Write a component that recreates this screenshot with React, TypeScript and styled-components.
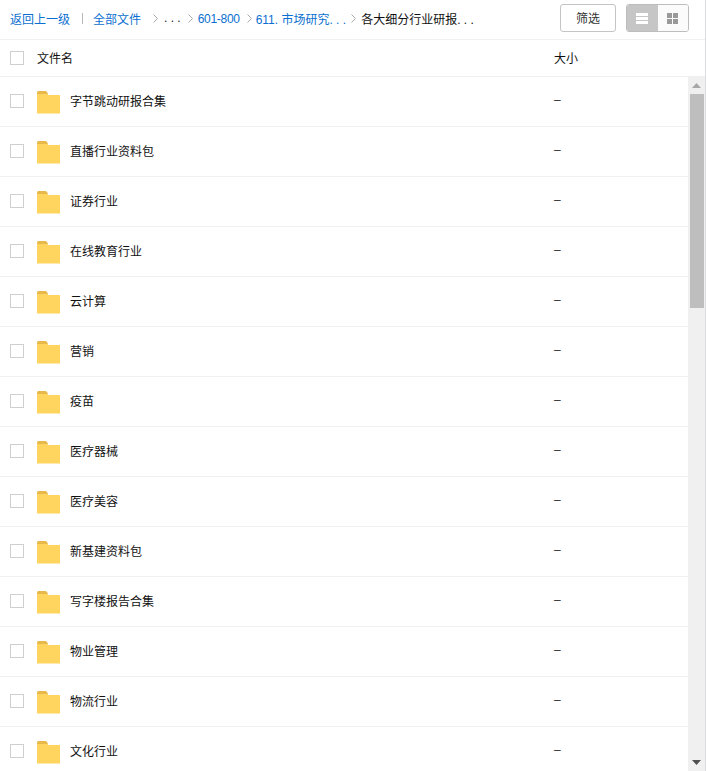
import React from 'react';
import styled, { createGlobalStyle } from 'styled-components';

const GlobalStyle = createGlobalStyle`
  html, body {
    margin: 0;
    padding: 0;
    background: #fff;
    overflow: hidden;
  }
  body {
    font-family: "Liberation Sans", "Noto Sans CJK SC", sans-serif;
    font-size: 12px;
    color: #111;
  }
`;

const Page = styled.div`
  width: 706px;
  height: 771px;
  display: flex;
  flex-direction: column;
  overflow: hidden;
  border-right: 1px solid #d8dde0;
  box-sizing: border-box;
`;

const Toolbar = styled.div`
  height: 40px;
  flex: none;
  box-sizing: border-box;
  display: flex;
  align-items: center;
  padding: 0 16px 3px 10px;
  border-bottom: 1px solid #f0f0f0;
`;

const Crumbs = styled.div`
  flex: 1;
  display: flex;
  align-items: center;
  white-space: nowrap;
`;

const CrumbLink = styled.a<{ $tight?: boolean }>`
  color: #0a6fd0;
  text-decoration: none;
  letter-spacing: ${(p) => (p.$tight ? '-0.3px' : 'normal')};
  padding-top: ${(p) => (p.$tight ? '2px' : '0')};
`;

const Divider = styled.span`
  width: 1px;
  height: 11px;
  background: #b8b8b8;
  margin: 0 10px 0 12px;
`;

const CrumbText = styled.span`
  color: #111;
`;

const Chevron = styled.svg<{ $left: number; $right: number }>`
  width: 5px;
  height: 9px;
  margin: 0 ${(p) => p.$right}px 0 ${(p) => p.$left}px;
  flex: none;
`;

const FilterButton = styled.button`
  width: 56px;
  height: 28px;
  margin-right: 10px;
  padding: 0 0 1px;
  background: #fff;
  border: 1px solid #c4c4c4;
  border-radius: 3px;
  font: inherit;
  color: #333;
`;

const ViewSwitch = styled.div`
  display: flex;
  width: 63px;
  height: 28px;
  box-sizing: border-box;
  border: 1px solid #bdbdbd;
  border-radius: 3px;
  overflow: hidden;
`;

const ViewOption = styled.div<{ $active?: boolean }>`
  flex: ${(p) => (p.$active ? '0 0 31px' : '1')};
  box-sizing: border-box;
  padding-right: 1px;
  display: flex;
  align-items: center;
  justify-content: center;
  background: ${(p) => (p.$active ? '#c6c6c6' : '#fbfbfb')};
`;

const HeaderRow = styled.div`
  height: 37px;
  flex: none;
  box-sizing: border-box;
  display: flex;
  align-items: center;
  padding-left: 10px;
  border-bottom: 1px solid #f0f0f0;
`;

const Checkbox = styled.span`
  width: 14px;
  height: 14px;
  flex: none;
  box-sizing: border-box;
  border: 1px solid #cfcfcf;
  background: #fff;
`;

const HeaderName = styled.span`
  width: 517px;
  margin-left: 13px;
  padding-bottom: 1px;
`;

const HeaderSize = styled.span`
  padding-bottom: 1px;
`;

const Body = styled.div`
  flex: 1;
  min-height: 0;
  display: flex;
`;

const List = styled.div`
  flex: 1;
  min-width: 0;
  overflow: hidden;
`;

const Row = styled.div`
  height: 50px;
  box-sizing: border-box;
  display: flex;
  align-items: center;
  padding: 0 0 1px 10px;
  border-bottom: 1px solid #f0f0f0;
`;

const FolderIcon = styled.svg`
  width: 23px;
  height: 23px;
  margin: 2px 0 0 13px;
  flex: none;
`;

const RowName = styled.span`
  width: 484px;
  margin-left: 10px;
  padding-bottom: 2px;
`;

const RowSize = styled.span`
  color: #333;
  padding-bottom: 2px;
`;

const Scrollbar = styled.div`
  width: 17px;
  flex: none;
  display: flex;
  flex-direction: column;
  align-items: center;
  background: #f0f0f0;
`;

const ScrollButton = styled.div`
  height: 17px;
  flex: none;
  display: flex;
  align-items: center;
  justify-content: center;
`;

const Thumb = styled.div`
  width: 14px;
  height: 214px;
  flex: none;
  background: #bebebe;
`;

const Track = styled.div`
  flex: 1;
`;

const folders = [
  '字节跳动研报合集',
  '直播行业资料包',
  '证券行业',
  '在线教育行业',
  '云计算',
  '营销',
  '疫苗',
  '医疗器械',
  '医疗美容',
  '新基建资料包',
  '写字楼报告合集',
  '物业管理',
  '物流行业',
  '文化行业',
];

const ChevronIcon: React.FC<{ left: number; right: number }> = ({ left, right }) => (
  <Chevron $left={left} $right={right} viewBox="0 0 5 9">
    <path d="M0.5 0.5 L4.5 4.5 L0.5 8.5" fill="none" stroke="#aaa" strokeWidth="1" />
  </Chevron>
);

const Folder: React.FC = () => (
  <FolderIcon viewBox="0 0 23 23">
    <path d="M0 1.5 Q0 0 1.5 0 H8 Q9.5 0 10 1 L11 3 H0 Z" fill="#e8b94a" />
    <path d="M0 3 H10.5 L11.5 4 H23 V22 H0 Z" fill="#ffd55f" />
    <rect x="0" y="22" width="23" height="1" fill="#ffe9ab" />
  </FolderIcon>
);

const App: React.FC = () => (
  <Page>
    <GlobalStyle />
    <Toolbar>
      <Crumbs>
        <CrumbLink>返回上一级</CrumbLink>
        <Divider />
        <CrumbLink>全部文件</CrumbLink>
        <ChevronIcon left={12} right={6} />
        <CrumbText>. . .</CrumbText>
        <ChevronIcon left={7} right={5} />
        <CrumbLink $tight>601-800</CrumbLink>
        <ChevronIcon left={7} right={4} />
        <CrumbLink>611. 市场研究. . .</CrumbLink>
        <ChevronIcon left={5} right={5} />
        <CrumbText>各大细分行业研报. . .</CrumbText>
      </Crumbs>
      <FilterButton>筛选</FilterButton>
      <ViewSwitch>
        <ViewOption $active>
          <svg width="12" height="11" viewBox="0 0 12 11">
            <rect width="12" height="3" fill="#fff" />
            <rect y="4" width="12" height="3" fill="#fff" />
            <rect y="8" width="12" height="3" fill="#fff" />
          </svg>
        </ViewOption>
        <ViewOption>
          <svg width="11" height="11" viewBox="0 0 11 11">
            <rect width="5" height="5" fill="#999" />
            <rect x="6" width="5" height="5" fill="#999" />
            <rect y="6" width="5" height="5" fill="#999" />
            <rect x="6" y="6" width="5" height="5" fill="#999" />
          </svg>
        </ViewOption>
      </ViewSwitch>
    </Toolbar>
    <HeaderRow>
      <Checkbox />
      <HeaderName>文件名</HeaderName>
      <HeaderSize>大小</HeaderSize>
    </HeaderRow>
    <Body>
      <List>
        {folders.map((name) => (
          <Row key={name}>
            <Checkbox />
            <Folder />
            <RowName>{name}</RowName>
            <RowSize>–</RowSize>
          </Row>
        ))}
      </List>
      <Scrollbar>
        <ScrollButton>
          <svg width="9" height="5" viewBox="0 0 9 5">
            <path d="M4.5 0 L9 5 H0 Z" fill="#a8a8a8" />
          </svg>
        </ScrollButton>
        <Thumb />
        <Track />
        <ScrollButton>
          <svg width="9" height="5" viewBox="0 0 9 5">
            <path d="M0 0 H9 L4.5 5 Z" fill="#505050" />
          </svg>
        </ScrollButton>
      </Scrollbar>
    </Body>
  </Page>
);

export default App;
